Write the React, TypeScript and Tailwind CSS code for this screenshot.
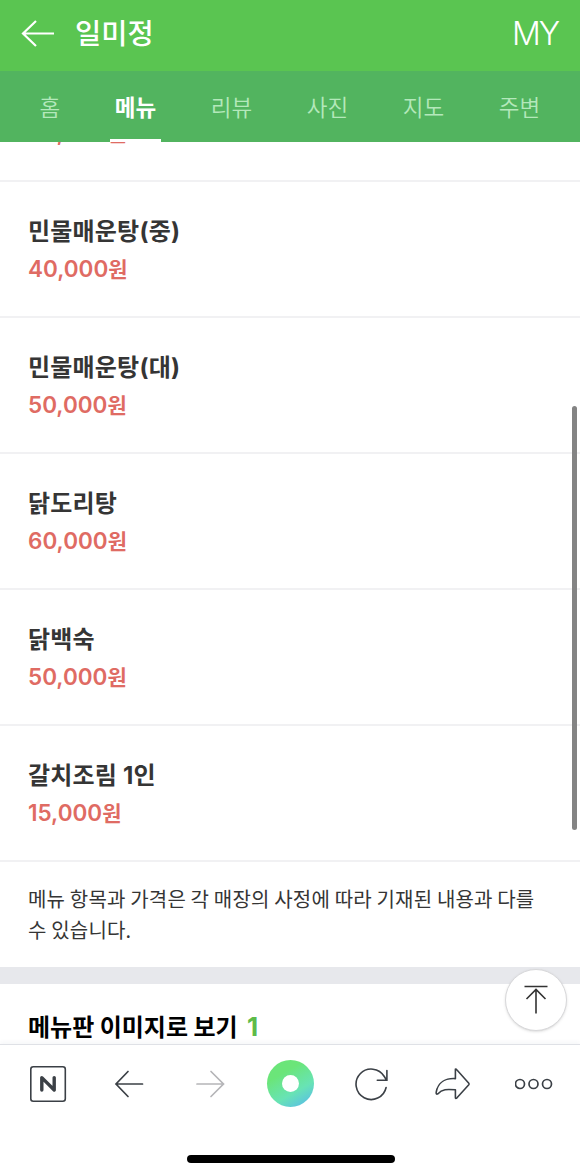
type MenuItem = {
  name: string;
  price: string;
};

const tabs = ["홈", "메뉴", "리뷰", "사진", "지도", "주변"];

const menuItems: MenuItem[] = [
  { name: "민물매운탕(소)", price: "30,000" },
  { name: "민물매운탕(중)", price: "40,000" },
  { name: "민물매운탕(대)", price: "50,000" },
  { name: "닭도리탕", price: "60,000" },
  { name: "닭백숙", price: "50,000" },
  { name: "갈치조림 1인", price: "15,000" },
];

function Header() {
  return (
    <header className="flex h-[71px] shrink-0 items-center bg-[#5ac551] pb-[4px] pl-[21px] pr-[22px] text-white">
      <svg width="34" height="28" viewBox="0 0 34 28" fill="none" stroke="currentColor" strokeWidth="2.2">
        <path d="M33 13.5H2M15 1L2 13.5L15 26" />
      </svg>
      <h1 className="ml-[20px] pb-[2px] text-[28.5px] leading-none font-medium">일미정</h1>
      <span className="ml-auto text-[32px] leading-none font-[350] tracking-[-2px] font-[Inter]">MY</span>
    </header>
  );
}

function TabBar({ active }: { active: string }) {
  return (
    <nav className="relative z-10 flex h-[71px] shrink-0 gap-[54.6px] bg-[#52b45f] pl-[39.4px] text-[22.5px] leading-[30px]">
      {tabs.map((tab) => (
        <div
          key={tab}
          className={
            tab === active
              ? "relative flex items-center pb-[2px] font-bold text-white"
              : "flex items-center pb-[2px] font-[350] text-[#b4e8bb]"
          }
        >
          {tab}
          {tab === active && (
            <span className="absolute -inset-x-[5px] bottom-0 h-[3px] bg-white" />
          )}
        </div>
      ))}
    </nav>
  );
}

function MenuRow({ item }: { item: MenuItem }) {
  return (
    <li className="h-[136px] border-b-2 border-[#f1f1f3] pt-[32px] pl-[28px]">
      <p className="font-[Inter,'Noto_Sans_CJK_KR',sans-serif] text-[24px] leading-[35px] font-bold tracking-[0.2px] text-[#353535]">
        {item.name}
      </p>
      <p className="mt-[3px] flex text-[22.5px] leading-[34px] font-semibold text-[#df6b63]">
        <span className="font-[Inter]">{item.price}</span>
        <span className="-mt-px text-[21px]">원</span>
      </p>
    </li>
  );
}

function TopButton() {
  return (
    <button className="absolute right-[13px] bottom-[13px] flex size-[62px] items-center justify-center rounded-full border border-[#d8d8da] bg-white text-[#333] shadow-sm">
      <svg width="26" height="30" viewBox="0 0 26 30" fill="none" stroke="currentColor" strokeWidth="1.6">
        <path d="M1.5 1.5H24.5M13 28.5V4.5M3.5 14L13 4.5L22.5 14" />
      </svg>
    </button>
  );
}

function Toolbar() {
  return (
    <footer className="relative h-[131px] shrink-0 border-t border-[#dfe1e6] bg-white text-[#3b4046] shadow-[0_-2px_4px_rgba(60,70,120,0.05)]">
      <div className="ml-[7px] grid h-[77px] w-[567px] grid-cols-7 place-items-center">
        <svg width="38" height="38" viewBox="0 0 38 38" fill="none" stroke="currentColor">
          <rect x="1.8" y="1.8" width="34.5" height="34.5" rx="2.5" strokeWidth="1.6" />
          <path d="M12.8 25V12.6L25.2 25V12.6" strokeWidth="3.4" strokeLinecap="round" strokeLinejoin="round" />
        </svg>
        <svg width="30" height="28" viewBox="0 0 30 28" fill="none" stroke="currentColor" strokeWidth="1.7" strokeLinecap="round">
          <path d="M28.5 14H2M14 1.5L2 14L14 26.5" />
        </svg>
        <svg className="text-[#b5b5b8]" width="30" height="28" viewBox="0 0 30 28" fill="none" stroke="currentColor" strokeWidth="1.7" strokeLinecap="round">
          <path d="M2 14H28.5M16 1.5L28.5 14L16 26.5" />
        </svg>
        <div className="flex size-[47px] items-center justify-center rounded-full bg-linear-150 from-[#6be579] from-30% via-[#68e3b4] via-65% to-[#59b4ee]">
          <span className="size-[17px] rounded-full bg-white" />
        </div>
        <svg width="34" height="34" viewBox="0 0 34 34" fill="none" stroke="currentColor" strokeWidth="1.6" strokeLinecap="round">
          <path d="M31.1 20.5A15.2 15.2 0 1 1 29.3 9.5L31.5 13.2M31.9 3.5V13.3H22.3" />
        </svg>
        <svg width="36" height="34" viewBox="0 0 36 34" fill="none" stroke="currentColor" strokeWidth="1.6" strokeLinejoin="round">
          <path d="M20.4 2.2Q21 1.8 22 3L33.8 16.2Q34.4 17 33.8 17.8L22 30.8Q20.6 32 20.4 30.8V22.8C12 22 7 22 3 26.8Q0.8 28 1.2 25.2C3 15 11 11 20.4 11.6Z" />
        </svg>
        <svg width="38" height="12" viewBox="0 0 38 12" fill="none" stroke="currentColor" strokeWidth="1.7">
          <circle cx="5" cy="6" r="4.5" />
          <circle cx="18.5" cy="6" r="4.5" />
          <circle cx="32" cy="6" r="4.5" />
        </svg>
      </div>
      <div className="mt-[33px] ml-[187px] h-[8px] w-[208px] rounded-full bg-black" />
    </footer>
  );
}

export default function App() {
  return (
    <div className="flex h-[1175px] w-[580px] flex-col overflow-hidden bg-white font-['Noto_Sans_CJK_KR',sans-serif]">
      <Header />
      <TabBar active="메뉴" />
      <main className="relative min-h-0 flex-1 overflow-hidden">
        <div className="-mt-[96px]">
          <ul>
            {menuItems.map((item) => (
              <MenuRow key={item.name} item={item} />
            ))}
          </ul>
          <p className="h-[105px] pt-[21px] pr-[40px] pl-[28px] text-[20px] leading-[31px] tracking-[0.18px] break-keep text-[#353535]">
            메뉴 항목과 가격은 각 매장의 사정에 따라 기재된 내용과 다를 수 있습니다.
          </p>
          <div className="h-[17px] bg-[#e7e8ec]" />
          <h2 className="pt-[24px] pl-[28px] text-[24px] leading-[36px] font-bold text-black">
            메뉴판 이미지로 보기 <span className="ml-[4px] text-[26px] leading-none text-[#5dbb49] font-[Inter]">1</span>
          </h2>
        </div>
        <span className="absolute top-[264px] right-[3px] h-[424px] w-[5px] rounded-full bg-[#848484]" />
        <TopButton />
      </main>
      <Toolbar />
    </div>
  );
}
